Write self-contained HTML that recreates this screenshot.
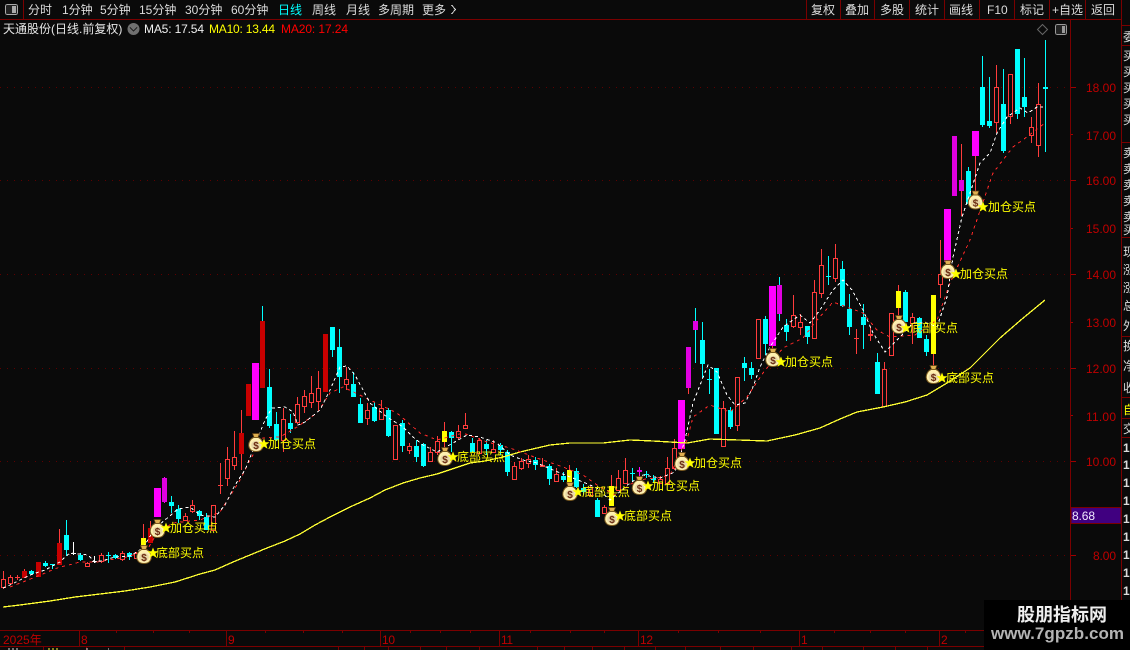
<!DOCTYPE html>
<html><head><meta charset="utf-8"><title>天通股份</title>
<style>
html,body{margin:0;padding:0;background:#0a0a0a;width:1130px;height:650px;overflow:hidden}
svg{display:block}
text{font-family:"Liberation Sans","WenQuanYi Zen Hei","Noto Sans CJK SC",sans-serif;font-size:12px}
.t text{fill:#dcdcdc}
.p text{fill:#c00000}
.l text{fill:#ffff00}
.d text{fill:#c00000}
</style></head><body>
<svg width="1130" height="650" viewBox="0 0 1130 650" shape-rendering="crispEdges">
<defs>
<g id="b" shape-rendering="auto">
<path d="M-3.500-9.500h7l-1.500 4h-4z" fill="#e0b050" stroke="#5a3a10" stroke-width=".8"/>
<path d="M-2.500-5.500C-9-2.500-9.500 8.500 0 8.500S9-2.500 2.500-5.500z" fill="#fff0b0" stroke="#7a5a20" stroke-width="1"/>
<ellipse cx="0" cy="2.200" rx="4.800" ry="4.300" fill="#e8d8a8"/>
<text x="0" y="5.800" text-anchor="middle" style="font-size:10px;font-weight:bold;fill:#6a2a10">$</text>
</g>
<polygon id="s" points="0,-5.500 1.500,-1.700 5.500,-1.700 2.300,.8 3.500,4.800 0,2.500 -3.500,4.800 -2.300,.8 -5.500,-1.700 -1.500,-1.700" fill="#ffff00" shape-rendering="auto"/>
</defs>

<!-- grid -->
<path d="M0 87.500H1068M0 180.500H1068M0 274.500H1068M0 368.500H1068M0 461.500H1068M0 555.500H1068" stroke="#5e0000" stroke-dasharray="1 6" fill="none"/>

<!-- red wicks & dojis -->
<path fill="none" stroke="#ff3c3c" d="M3.500 571V589M10.500 575V585M17.500 575V580M15 577.500h5M87.500 562V567M101.500 553V563M122.500 551V561M136.500 552V558M185.500 513V520M192.500 500V513M213.500 505V530M220.500 463V494M218 485.500h5M227.500 447V486M234.500 431V470M283.500 408V452M297.500 397V424M304.500 390V413M311.500 376V408M318.500 371V411M346.500 367V390M367.500 403V425M381.500 400V420M395.500 425V459M409.500 443V454M430.500 447V462M437.500 436V455M458.500 425V440M465.500 413V428M479.500 438V454M493.500 440V452M514.500 462V479M521.500 458V470M528.500 455V468M542.500 458V467M540 465.500h5M540 466.500h5M556.500 468V481M590.500 485V497M604.500 505V514M618.500 470V491M625.500 458V484M660.500 476V484M667.500 457V485M674.500 439V470M723.500 401V446M737.500 377V431M758.500 319V359M793.500 295V328M800.500 314V335M814.500 280V338M821.500 249V298M835.500 244V282M856.500 329V354M854 338.500h5M870.500 327V341M868 334.500h5M868 335.500h5M884.500 362V406M891.500 313V355M912.500 313V344M940.500 240V298M996.500 65V133M1010.500 74V124M1031.500 117V143M1038.500 83V157M255.500 363V400M681.500 449V453M688.500 388V394M772.500 346V353M961.500 144V216M975.500 156V197M143.500 524V538M444.500 422V452M898.500 285V317M933.500 354V368M611.500 475V486M569.500 465V470M24.500 569V571M59.500 529V543M150.500 521V528M241.500 410V470"/>
<path fill="none" stroke="#ffffff" d="M73.500 542V555M71 553.500h5M94.500 556V563M92 561.500h5"/>

<!-- red hollow bodies -->
<path fill="#0a0a0a" stroke="#ff3c3c" d="M1.500 579.500h4V587.500h-4zM8.500 577.500h4V583.500h-4zM85.500 563.500h4V566.500h-4zM99.500 555.500h4V561.500h-4zM120.500 553.500h4V559.500h-4zM134.500 553.500h4V558.500h-4zM183.500 516.500h4V520.500h-4zM190.500 505.500h4V511.500h-4zM211.500 505.500h4V530.500h-4zM225.500 459.500h4V478.500h-4zM232.500 457.500h4V465.500h-4zM281.500 419.500h4V440.500h-4zM295.500 404.500h4V422.500h-4zM302.500 396.500h4V406.500h-4zM309.500 393.500h4V402.500h-4zM316.500 388.500h4V401.500h-4zM344.500 379.500h4V384.500h-4zM365.500 410.500h4V418.500h-4zM379.500 408.500h4V419.500h-4zM393.500 425.500h4V459.500h-4zM407.500 446.500h4V450.500h-4zM428.500 452.500h4V461.500h-4zM435.500 441.500h4V452.500h-4zM456.500 431.500h4V437.500h-4zM463.500 425.500h4V428.500h-4zM477.500 440.500h4V453.500h-4zM491.500 449.500h4V452.500h-4zM512.500 466.500h4V479.500h-4zM519.500 461.500h4V468.500h-4zM526.500 459.500h4V463.500h-4zM554.500 474.500h4V481.500h-4zM588.500 487.500h4V495.500h-4zM602.500 507.500h4V513.500h-4zM616.500 478.500h4V490.500h-4zM623.500 470.500h4V483.500h-4zM658.500 479.500h4V483.500h-4zM665.500 468.500h4V483.500h-4zM672.500 448.500h4V468.500h-4zM721.500 408.500h4V446.500h-4zM735.500 377.500h4V425.500h-4zM756.500 319.500h4V358.500h-4zM791.500 315.500h4V326.500h-4zM798.500 322.500h4V327.500h-4zM812.500 292.500h4V338.500h-4zM819.500 265.500h4V293.500h-4zM833.500 258.500h4V278.500h-4zM882.500 369.500h4V406.500h-4zM889.500 313.500h4V355.500h-4zM910.500 317.500h4V323.500h-4zM938.500 274.500h4V284.500h-4zM994.500 87.500h4V122.500h-4zM1008.500 74.500h4V116.500h-4zM1029.500 127.500h4V135.500h-4zM1036.500 104.500h4V145.500h-4z"/>

<!-- cyan wicks -->
<path fill="none" stroke="#00ffff" d="M31.500 570V575M45.500 561V567M52.500 564V569M66.500 520V556M80.500 553V561M108.500 552V563M115.500 554V559M129.500 552V560M171.500 496V513M178.500 505V523M199.500 510V520M206.500 513V530M269.500 369V428M276.500 412V441M290.500 414V433M332.500 327V357M339.500 329V393M353.500 372V397M360.500 398V423M374.500 402V422M388.500 408V437M402.500 420V452M416.500 440V462M423.500 443V467M451.500 431V452M472.500 438V452M486.500 440V455M500.500 443V455M507.500 450V476M535.500 457V470M549.500 464V485M563.500 472V482M576.500 468V488M583.500 484V495M597.500 498V517M632.500 468V482M646.500 471V478M653.500 475V483M695.500 308V363M702.500 322V378M709.500 369V394M716.500 368V434M730.500 407V429M744.500 357V381M751.500 362V379M765.500 316V355M786.500 319V341M807.500 326V344M828.500 256V285M842.500 261V307M849.500 294V335M863.500 304V349M877.500 353V394M905.500 290V322M919.500 317V338M926.500 335V356M968.500 167V205M982.500 56V127M989.500 77V128M1003.500 69V153M1017.500 49V119M1024.500 58V117M1045.500 40V152M779.500 277V321M262.500 306V321"/>
<!-- cyan bodies -->
<path fill="none" stroke="#00ffff" stroke-width="5" d="M31.500 571V574M45.500 563V566M66.500 535V550M80.500 555V560M129.500 553V557M171.500 502V506M178.500 509V519M199.500 511V516M206.500 517V530M269.500 387V426M276.500 424V440M290.500 423V429M332.500 327V350M339.500 347V377M353.500 384V397M360.500 404V423M374.500 407V421M388.500 410V436M402.500 423V446M416.500 446V457M423.500 444V466M451.500 432V438M472.500 443V452M486.500 444V449M500.500 445V450M507.500 452V472M535.500 460V465M549.500 466V479M563.500 476V480M576.500 471V487M583.500 488V492M597.500 500V517M653.500 478V480M702.500 340V364M716.500 368V434M730.500 410V427M744.500 363V368M751.500 368V375M765.500 319V344M786.500 325V332M807.500 326V337M842.500 269V306M849.500 309V327M863.500 317V325M877.500 362V394M905.500 292V322M919.500 318V338M926.500 339V352M968.500 171V204M982.500 87V125M989.500 121V126M1003.500 104V151M1017.500 49V114M1024.500 97V107M1045.500 87V89M52.500 564V565M108.500 555V556M115.500 555V558M632.500 473V474M646.500 474V475M709.500 379V380M828.500 276V277"/>
<path fill="none" stroke="#c80000" stroke-width="5" d="M24.500 571V578M38.500 562V577M59.500 543V565M150.500 528V543M241.500 433V454M248.500 384V416M262.500 321V388M325.500 334V392"/>
<path fill="none" stroke="#ff00ff" d="M164.500 477V503M639.500 467V480"/>
<path fill="none" stroke="#ff00ff" stroke-width="7" d="M157.500 488V517M255.500 363V420M681.500 400V449M772.500 286V346M947.500 209V262M975.500 131V156"/>
<path fill="none" stroke="#e000e0" stroke-width="5" d="M164.500 478V502M688.500 347V388M695.500 321V330M779.500 285V314M954.500 136V196M961.500 180V191M639.500 470V472"/>
<path fill="none" stroke="#ffff00" stroke-width="5" d="M143.500 538V546M444.500 431V442M569.500 470V483M611.500 486V506M898.500 291V308M933.500 295V354"/>

<!-- long MA -->
<polyline fill="none" stroke="#ffff33" stroke-width="1.300" points="3,607 20,605 50,601 75,597 100,594 125,591 150,587 175,582 200,574 215,570 233,562 250,555 267,548 285,541 300,534 315,525 330,517 350,507 370,498 385,490 403,483 420,478 437,474 455,468 470,463 485,461 503,457 520,452 537,448 550,445 570,443 603,443 630,440 653,441 687,443 710,439 767,441 795,435 820,428 840,419 857,412 883,407 905,402 927,395 947,383 970,368 985,353 1000,338 1022,319 1045,300"/>
<!-- MA20 -->
<polyline fill="none" stroke="#ff2828" stroke-dasharray="3 4" points="10,587 33,578 57,568 80,562 97,562 127,557 147,550 157,533 173,523 200,520 220,512 240,480 250,460 263,438 280,437 297,427 317,413 330,393 343,387 370,400 397,413 420,433 437,440 463,433 487,442 510,448 537,458 563,467 583,475 597,485 615,495 637,480 657,478 670,475 687,440 693,417 710,405 730,412 747,397 763,373 783,348 803,338 817,320 833,302 863,313 877,330 890,337 915,335 937,320 950,283 970,240 993,173 1013,147 1028,136 1045,123"/>
<!-- MA5 -->
<polyline fill="none" stroke="#ffffff" stroke-dasharray="3 3" points="3,588 10,585 20,580 30,575 45,570 60,562 64,558 70,553 80,554 88,555 95,562 105,560 115,557 130,556 143,548 155,528 165,520 178,509 190,507 200,515 215,517 225,505 235,485 245,470 255,445 265,420 272,408 285,407 293,412 298,425 305,422 320,410 330,390 340,367 347,366 355,375 370,403 387,417 403,427 413,437 423,445 437,452 453,443 467,435 480,437 497,443 510,455 523,460 537,463 553,470 570,477 583,482 597,488 610,500 630,483 643,475 660,478 675,472 685,440 693,403 702,380 708,365 717,372 727,395 735,405 745,403 753,387 760,367 770,347 783,327 800,315 810,323 820,310 833,290 843,280 852,290 863,310 873,333 885,352 900,337 913,323 927,323 937,327 947,297 953,257 962,217 980,163 990,153 997,133 1007,117 1020,108 1028,113 1037,107 1043,107"/>

<!-- markers -->
<use href="#b" x="144" y="555"/><use href="#b" x="157.500" y="529"/><use href="#b" x="256" y="443"/><use href="#b" x="445" y="457"/><use href="#b" x="570" y="492"/><use href="#b" x="612" y="517"/><use href="#b" x="639.500" y="486"/><use href="#b" x="682" y="462"/><use href="#b" x="773" y="358"/><use href="#b" x="899" y="325"/><use href="#b" x="933.500" y="375"/><use href="#b" x="948" y="270"/><use href="#b" x="975.500" y="200.500"/>
<use href="#s" x="153" y="553"/><use href="#s" x="166" y="528"/><use href="#s" x="264" y="444"/><use href="#s" x="453" y="457"/><use href="#s" x="578" y="492"/><use href="#s" x="620" y="516"/><use href="#s" x="648" y="486"/><use href="#s" x="690" y="463"/><use href="#s" x="781" y="362"/><use href="#s" x="906" y="328"/><use href="#s" x="942" y="378"/><use href="#s" x="956" y="274"/><use href="#s" x="983" y="207"/>
<g class="l">
<text x="156" y="557">底部买点</text><text x="170" y="532">加仓买点</text><text x="268" y="448">加仓买点</text><text x="457" y="461">底部买点</text><text x="582" y="496">底部买点</text><text x="624" y="520">底部买点</text><text x="652" y="490">加仓买点</text><text x="694" y="467">加仓买点</text><text x="785" y="366">加仓买点</text><text x="910" y="332">底部买点</text><text x="946" y="382">底部买点</text><text x="960" y="278">加仓买点</text><text x="988" y="211">加仓买点</text>
</g>

<!-- top bar -->
<rect x="0" y="0" width="1130" height="19" fill="#0a0a0a"/>
<path d="M0 19.500H1121M23.500 0V19M806.500 0V19M840.500 0V19M874.500 0V19M909.500 0V19M944.500 0V19M979.500 0V19M1014.500 0V19M1049.500 0V19M1085.500 0V19M1121.500 0V19" stroke="#7a0000" fill="none"/>
<rect x="5.500" y="4.500" width="12" height="10" rx="2" fill="#222" stroke="#aaa"/><rect x="12" y="6" width="4" height="7" fill="#aaa"/>
<g class="t">
<text x="28" y="14">分时</text><text x="62" y="14">1分钟</text><text x="100" y="14">5分钟</text><text x="139" y="14">15分钟</text><text x="185" y="14">30分钟</text><text x="231" y="14">60分钟</text><text x="278" y="14" style="fill:#00ffff">日线</text><text x="312" y="14">周线</text><text x="346" y="14">月线</text><text x="378" y="14">多周期</text><text x="422" y="14">更多</text>
<text x="811" y="14">复权</text><text x="845" y="14">叠加</text><text x="880" y="14">多股</text><text x="915" y="14">统计</text><text x="949" y="14">画线</text><text x="987" y="14">F10</text><text x="1020" y="14">标记</text><text x="1052" y="14">+自选</text><text x="1091" y="14">返回</text>
</g>
<path d="M451.500 5l4 4.500-4 4.500" fill="none" stroke="#dcdcdc"/>

<!-- header legend -->
<text x="3" y="33" style="fill:#e6e6e6">天通股份(日线.前复权)</text>
<circle cx="133.500" cy="29" r="6" fill="#707070" shape-rendering="auto"/><path d="M130 27.500l3.500 3.500 3.500-3.500" stroke="#222" fill="none"/>
<text x="144" y="33" textLength="60" style="fill:#f0f0f0">MA5: 17.54</text>
<text x="209" y="33" textLength="66" style="fill:#ffff00">MA10: 13.44</text>
<text x="281" y="33" textLength="67" style="fill:#ff0000">MA20: 17.24</text>
<path d="M1042.500 24.500l5 5-5 5-5-5z" fill="none" stroke="#666" shape-rendering="auto"/>
<rect x="1055.500" y="24.500" width="11" height="10" rx="2" fill="#222" stroke="#999"/><rect x="1062" y="26" width="3" height="7" fill="#999"/>

<!-- axis -->
<path d="M1070.500 19V630" stroke="#7a0000" stroke-width="1.200" fill="none"/>
<path d="M1071 87.500h5M1071 134.500h2M1071 180.500h5M1071 228.500h2M1071 274.500h5M1071 322.500h2M1071 368.500h5M1071 415.500h2M1071 461.500h5M1071 555.500h5" stroke="#a00000" fill="none"/>
<g class="p">
<text x="1086" y="92" textLength="30">18.00</text><text x="1086" y="140" textLength="30">17.00</text><text x="1086" y="185" textLength="30">16.00</text><text x="1086" y="233" textLength="30">15.00</text><text x="1086" y="279" textLength="30">14.00</text><text x="1086" y="327" textLength="30">13.00</text><text x="1086" y="373" textLength="30">12.00</text><text x="1086" y="421" textLength="30">11.00</text><text x="1086" y="466" textLength="30">10.00</text><text x="1093" y="560" textLength="23">8.00</text>
</g>
<rect x="1071" y="507.500" width="50" height="16" fill="#400080" stroke="#7a0000"/>
<text x="1072" y="520" textLength="23" style="fill:#f0e8ff">8.68</text>

<!-- right column -->
<path d="M1121.500 19V600M1122 25.500h8M1122 45.500h8M1122 142.500h8M1122 237.500h8M1122 336.500h8M1122 397.500h8M1122 418.500h8M1122 437.500h8" stroke="#7a0000" fill="none"/>
<svg x="1122" y="20" width="8" height="580" viewBox="1122 20 8 580">
<g style="fill:#dcdcdc">
<text x="1123" y="41">委</text><text x="1123" y="60">买</text><text x="1123" y="76">买</text><text x="1123" y="92">买</text><text x="1123" y="108">买</text><text x="1123" y="124">买</text><text x="1123" y="157">卖</text><text x="1123" y="173">卖</text><text x="1123" y="189">卖</text><text x="1123" y="205">卖</text><text x="1123" y="221">卖</text><text x="1123" y="234">买</text>
<text x="1123" y="256">现</text><text x="1123" y="274">涨</text><text x="1123" y="292">涨</text><text x="1123" y="310">总</text><text x="1123" y="330">外</text>
<text x="1123" y="350">换</text><text x="1123" y="370">净</text><text x="1123" y="392">收</text>
<text x="1123" y="414" style="fill:#ffff00">自</text><text x="1123" y="433">交</text>
<text x="1123" y="452" style="font-weight:bold">1</text><text x="1123" y="469" style="font-weight:bold">1</text><text x="1123" y="487" style="font-weight:bold">1</text><text x="1123" y="505" style="font-weight:bold">1</text><text x="1123" y="523" style="font-weight:bold">1</text><text x="1123" y="541" style="font-weight:bold">1</text><text x="1123" y="559" style="font-weight:bold">1</text><text x="1123" y="577" style="font-weight:bold">1</text><text x="1123" y="595" style="font-weight:bold">1</text>
</g></svg>

<!-- date axis -->
<path d="M0 630.500H1070M0 646.500H1070M79.500 631V646M226.500 631V646M380.500 631V646M499.500 631V646M638.500 631V646M799.500 631V646M939.500 631V646" stroke="#7a0000" fill="none"/>
<path d="M43.500 647V650M86.500 647V650M124.500 647V650M338.500 647V650M364.500 647V650M388.500 647V650M420.500 647V650M446.500 647V650M479.500 647V650M537.500 647V650M564.500 647V650M592.500 647V650M624.500 647V650M655.500 647V650M685.500 647V650M720.500 647V650M753.500 647V650M791.500 647V650M822.500 647V650M863.500 647V650M895.500 647V650M927.500 647V650M116.500 631V633M153.500 631V633M189.500 631V633M265.500 631V633M303.500 631V633M342.500 631V633M410.500 631V633M440.500 631V633M470.500 631V633M530.500 631V633M570.500 631V633M604.500 631V633M678.500 631V633M718.500 631V633M760.500 631V633M834.500 631V633M870.500 631V633M905.500 631V633M965.500 631V633" stroke="#7a0000" fill="none"/>
<path d="M8 649h12M86 649h2M108 649h1" stroke="#dcdcdc" stroke-dasharray="2 2" fill="none"/><path d="M48 649h12" stroke="#ffff33" stroke-dasharray="2 2" fill="none"/>
<g class="d">
<text x="3" y="644">2025年</text><text x="81" y="644">8</text><text x="228" y="644">9</text><text x="382" y="644" textLength="13">10</text><text x="501" y="644" textLength="12">11</text><text x="640" y="644" textLength="13">12</text><text x="801" y="644">1</text><text x="941" y="644">2</text>
</g>

<!-- watermark -->
<rect x="984" y="600" width="146" height="50" fill="#000"/>
<text x="1017" y="621" textLength="90" style="font-size:18px;font-weight:bold;fill:#eee">股朋指标网</text>
<text x="991" y="639" textLength="133" style="font-size:17px;font-weight:bold;fill:#b4b4b4">www.7gpzb.com</text>
</svg>
</body></html>
